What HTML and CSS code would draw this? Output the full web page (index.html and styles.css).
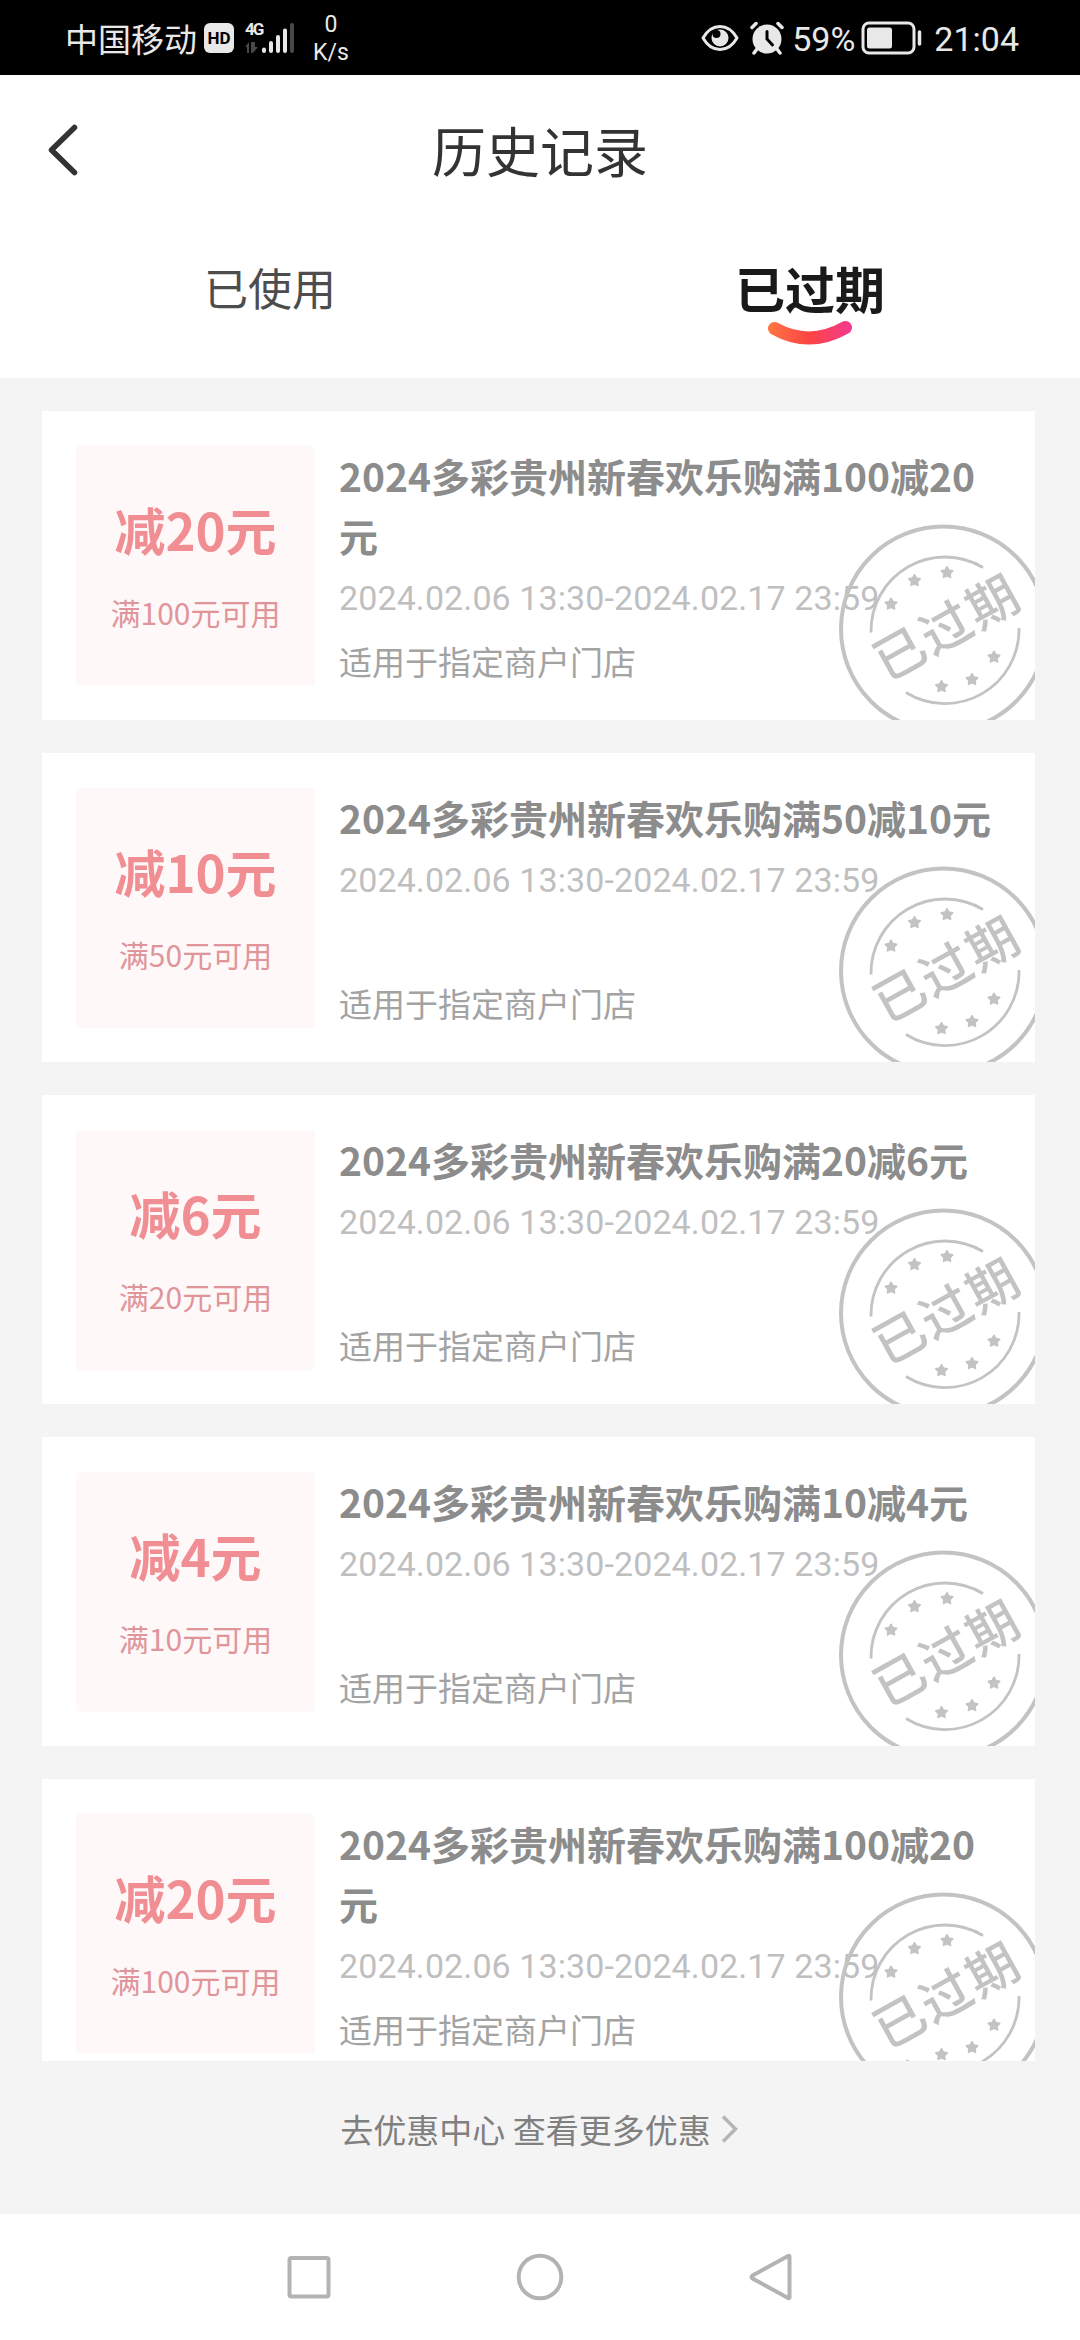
FILE: index.html
```html
<!DOCTYPE html>
<html lang="zh-CN">
<head>
  <meta charset="UTF-8">
  <meta name="viewport" content="width=device-width, initial-scale=1.0">
  <title>历史记录</title>
  <link rel="stylesheet" href="styles.css">
</head>
<body>
  <!-- shared shapes -->
  <svg class="defs" width="0" height="0">
    <symbol id="star" viewBox="-7 -7 14 14">
      <path d="M0-5.6 1.8-2.4 5.6-1.7 2.9 1 3.4 4.8 0 3.2-3.4 4.8-2.9 1-5.6-1.7-1.8-2.4z" fill="#c3c3c3" stroke="#c3c3c3" stroke-width="1.8" stroke-linejoin="round"/>
    </symbol>
    <symbol id="stamp" viewBox="0 0 210 210">
      <g fill="none" stroke="#c3c3c3">
        <circle cx="105.500" cy="105" r="102.5" stroke-width="4"/>
        <path d="M33 108.500A74 74 0 0 1 145 43.500" stroke-width="2.800"/>
        <path d="M181 104A74 74 0 0 1 68 168.500" stroke-width="2.800"/>
      </g>
      <use href="#star" x="46" y="73" width="14" height="14"/>
      <use href="#star" x="69.500" y="49.500" width="14" height="14"/>
      <use href="#star" x="102" y="41.500" width="14" height="14"/>
      <use href="#star" x="149" y="126" width="14" height="14"/>
      <use href="#star" x="127" y="148.500" width="14" height="14"/>
      <use href="#star" x="96.500" y="155.500" width="14" height="14"/>
      <text class="stamp-text" x="109" y="123" text-anchor="middle" transform="rotate(-29 107 104)">已过期</text>
    </symbol>
  </svg>

  <div class="status-bar">
    <div class="status-left">
      <span class="carrier">中国移动</span>
      <span class="hd">HD</span>
      <div class="network">
        <span class="network-type">4G</span>
        <svg width="50" height="34" viewBox="0 0 50 34">
          <g fill="#484848">
            <path d="M0 26l4-5v11h-2v-6zM6 21h2v6l4-1-5 6h-1z"/>
            <path d="M8 21v11l5-6h-3v-5z"/>
          </g>
          <g stroke="#e8e8e8" stroke-width="4" stroke-linecap="round">
            <path d="M19 28.500v1.500M26 22v8M33 16v14M40 9.500v20.500"/>
            <path stroke="#484848" d="M47 4v26"/>
          </g>
        </svg>
      </div>
      <div class="speed"><span>0</span><span>K/s</span></div>
    </div>
    <div class="status-right">
      <svg class="eye" width="38" height="28" viewBox="0 0 38 28">
        <path d="M2 14C6 7 12 2.500 19 2.500S32 7 36 14C32 21 26 25.500 19 25.500S6 21 2 14z" fill="none" stroke="#e8e8e8" stroke-width="3" stroke-linejoin="round"/>
        <circle cx="19" cy="14" r="8.500" fill="#e8e8e8"/>
        <circle cx="15.500" cy="10" r="4" fill="#000"/>
      </svg>
      <svg class="alarm" width="34" height="34" viewBox="0 0 34 34">
        <circle cx="17" cy="18" r="14.500" fill="#e8e8e8"/>
        <path d="M2 6.500l4-4M32 6.500l-4-4M7 28l-3 4M27 28l3 4" stroke="#e8e8e8" stroke-width="3.500" stroke-linecap="round"/>
        <path d="M17 10.500V18l5.500 6" fill="none" stroke="#000" stroke-width="3" stroke-linecap="round"/>
      </svg>
      <span class="percent">59%</span>
      <svg class="battery" width="62" height="34" viewBox="0 0 62 34">
        <rect x="2" y="2" width="51" height="30" rx="6" fill="none" stroke="#e8e8e8" stroke-width="3"/>
        <rect x="6" y="6.500" width="25" height="21" rx="2.500" fill="#e8e8e8"/>
        <path d="M58.500 11v12" stroke="#e8e8e8" stroke-width="3.500" stroke-linecap="round"/>
      </svg>
      <span class="clock">21:04</span>
    </div>
  </div>

  <header class="header">
    <svg class="back" width="34" height="54" viewBox="0 0 34 54">
      <path d="M28.500 4.500 5.500 27l23 22.500" fill="none" stroke="#333" stroke-width="5.500" stroke-linecap="round" stroke-linejoin="round"/>
    </svg>
    <h1>历史记录</h1>
  </header>

  <nav class="tabs">
    <div class="tab">已使用</div>
    <div class="tab active">
      已过期
      <svg class="smile" width="90" height="30" viewBox="0 0 90 30">
        <defs>
          <linearGradient id="smileFill" gradientUnits="userSpaceOnUse" x1="0" y1="0" x2="90" y2="0">
            <stop offset="0.050" stop-color="#ff7544"/>
            <stop offset="0.500" stop-color="#fb4345"/>
            <stop offset="0.950" stop-color="#f43b8e"/>
          </linearGradient>
        </defs>
        <path d="M9.500 10.500Q44.500 30 80.500 9.500" fill="none" stroke="url(#smileFill)" stroke-width="13" stroke-linecap="round"/>
      </svg>
    </div>
  </nav>

  <main class="coupon-list">
    <div class="coupon">
      <div class="coupon-tag"><strong>减20元</strong><span>满100元可用</span></div>
      <div class="coupon-info">
        <h2>2024多彩贵州新春欢乐购满100减20元</h2>
        <p class="date">2024.02.06 13:30-2024.02.17 23:59</p>
        <p class="scope">适用于指定商户门店</p>
      </div>
      <svg class="stamp"><use href="#stamp"/></svg>
    </div>
    <div class="coupon">
      <div class="coupon-tag"><strong>减10元</strong><span>满50元可用</span></div>
      <div class="coupon-info">
        <h2>2024多彩贵州新春欢乐购满50减10元</h2>
        <p class="date">2024.02.06 13:30-2024.02.17 23:59</p>
        <p class="scope">适用于指定商户门店</p>
      </div>
      <svg class="stamp"><use href="#stamp"/></svg>
    </div>
    <div class="coupon">
      <div class="coupon-tag"><strong>减6元</strong><span>满20元可用</span></div>
      <div class="coupon-info">
        <h2>2024多彩贵州新春欢乐购满20减6元</h2>
        <p class="date">2024.02.06 13:30-2024.02.17 23:59</p>
        <p class="scope">适用于指定商户门店</p>
      </div>
      <svg class="stamp"><use href="#stamp"/></svg>
    </div>
    <div class="coupon">
      <div class="coupon-tag"><strong>减4元</strong><span>满10元可用</span></div>
      <div class="coupon-info">
        <h2>2024多彩贵州新春欢乐购满10减4元</h2>
        <p class="date">2024.02.06 13:30-2024.02.17 23:59</p>
        <p class="scope">适用于指定商户门店</p>
      </div>
      <svg class="stamp"><use href="#stamp"/></svg>
    </div>
    <div class="coupon">
      <div class="coupon-tag"><strong>减20元</strong><span>满100元可用</span></div>
      <div class="coupon-info">
        <h2>2024多彩贵州新春欢乐购满100减20元</h2>
        <p class="date">2024.02.06 13:30-2024.02.17 23:59</p>
        <p class="scope">适用于指定商户门店</p>
      </div>
      <svg class="stamp"><use href="#stamp"/></svg>
    </div>
  </main>

  <div class="more">
    <span>去优惠中心 查看更多优惠</span>
    <svg width="20" height="32" viewBox="0 0 20 32">
      <path d="M3 3.500 15.500 16 3 28.500" fill="none" stroke="#b5b5b5" stroke-width="3.500"/>
    </svg>
  </div>

  <div class="nav-bar">
    <svg width="50" height="50" viewBox="0 0 50 50"><rect x="5.500" y="6" width="39" height="38.500" rx="2"/></svg>
    <svg width="50" height="50" viewBox="0 0 50 50"><circle cx="25" cy="25" r="21.300"/></svg>
    <svg width="50" height="50" viewBox="0 0 50 50"><path d="M43.500 4.500v41q0 1-1.500.500L6.500 26.500q-2-1.500 0-3L42 4q1.500-.500 1.500.500z"/></svg>
  </div>
</body>
</html>
```
FILE: styles.css
```css
* {
  box-sizing: border-box;
}
body {
  margin: 0;
  width: 1080px;
  height: 2340px;
  overflow: hidden;
  display: flex;
  flex-direction: column;
  background: #f4f4f4;
  font-family: "Noto Sans CJK SC", sans-serif;
}
h1, h2, p {
  margin: 0;
}
.defs {
  position: absolute;
}

/* status bar */
.status-bar {
  height: 75px;
  background: #000;
  color: #e8e8e8;
  display: flex;
  justify-content: space-between;
  padding: 0 61px 0 65px;
}
.status-left, .status-right {
  display: flex;
  align-items: center;
}
.carrier {
  font-size: 33px;
  line-height: 50px;
  margin-top: 1px;
}
.hd {
  width: 30px;
  height: 30px;
  margin-left: 7px;
  border-radius: 6px;
  background: #e8e8e8;
  color: #000;
  font: bold 17px/30px Roboto, sans-serif;
  text-align: center;
}
.network {
  display: flex;
  margin-left: 11px;
  width: 50px;
  height: 34px;
  position: relative;
}
.network-type {
  position: absolute;
  left: 0;
  top: -1px;
  font: bold 17px/18px "Roboto", sans-serif;
  letter-spacing: -2px;
}
.speed {
  display: flex;
  flex-direction: column;
  align-items: center;
  margin-left: 18px;
  font: 23px/28px Roboto, sans-serif;
  margin-top: 3px;
}
.eye {
  margin-right: 11px;
}
.alarm {
  margin-right: 8px;
}
.percent, .clock {
  font: 34px/50px Roboto, sans-serif;
  margin-top: 2px;
}
.battery {
  margin: 0 11px 0 6px;
}

/* title and tabs */
.header {
  height: 150px;
  background: #fff;
  display: flex;
  align-items: center;
  justify-content: center;
  position: relative;
}
.back {
  position: absolute;
  left: 46px;
  top: 48px;
}
h1 {
  font-size: 54px;
  font-weight: 400;
  line-height: 80px;
  color: #333;
}
.tabs {
  height: 153px;
  background: #fff;
  display: flex;
}
.tab {
  flex: 1;
  text-align: center;
  font-size: 44px;
  line-height: 124px;
  color: #4d4d4d;
  position: relative;
}
.tab.active {
  font-size: 50px;
  font-weight: 700;
  color: #1a1a1a;
}
.smile {
  position: absolute;
  left: 225px;
  top: 93px;
}

/* coupons */
.coupon-list {
  height: 1683px;
  padding: 33px 45px 0 42px;
  overflow: hidden;
}
.coupon {
  height: 309px;
  margin-bottom: 33px;
  padding: 35px 34px;
  background: #fff;
  display: flex;
  position: relative;
  overflow: hidden;
}
.coupon-tag {
  width: 239px;
  height: 240px;
  border-radius: 4px;
  background: #fef8f8;
  display: flex;
  flex-direction: column;
  align-items: center;
  padding-top: 45px;
}
.coupon-tag strong {
  font-size: 51px;
  line-height: 76px;
  color: #f08e93;
}
.coupon-tag span {
  margin-top: 23px;
  font-size: 30px;
  line-height: 44px;
  color: #e0959b;
}
.coupon-info {
  flex: 1;
  height: 238px;
  margin-top: -1px;
  margin-left: 24px;
  display: flex;
  flex-direction: column;
}
h2 {
  font-size: 39px;
  font-weight: 700;
  line-height: 60px;
  color: #8c8c8c;
}
.date {
  font-family: Roboto, sans-serif;
  font-size: 34px;
  line-height: 66px;
  letter-spacing: 0.1px;
  color: #bfbfbf;
}
.scope {
  margin-top: auto;
  font-size: 33px;
  line-height: 44px;
  color: #a3a3a3;
}
.stamp {
  position: absolute;
  left: 796px;
  top: 113px;
  width: 210px;
  height: 210px;
}
.stamp-text {
  font-family: "Noto Sans CJK SC", sans-serif;
  font-size: 51px;
  font-weight: 500;
  letter-spacing: 2px;
  fill: #c3c3c3;
}

/* bottom link */
.more {
  height: 153px;
  padding-bottom: 17px;
  display: flex;
  align-items: center;
  justify-content: center;
  gap: 9px;
  font-size: 33px;
  color: #808080;
}

/* system buttons */
.nav-bar {
  height: 126px;
  background: #fff;
  display: flex;
  align-items: center;
  justify-content: center;
  gap: 181px;
}
.nav-bar svg {
  fill: none;
  stroke: #b3b3b3;
  stroke-width: 4;
}
```
